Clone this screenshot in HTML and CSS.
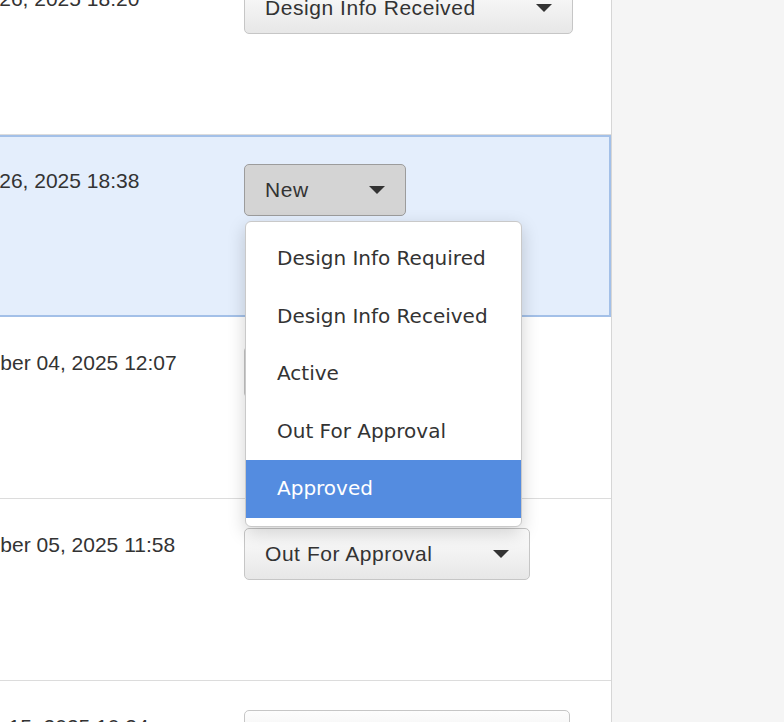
FILE: index.html
```html
<!DOCTYPE html>
<html lang="en">
<head>
    <meta charset="UTF-8">
    <meta name="viewport" content="width=device-width, initial-scale=1.0">
    <title>Orders</title>
    <link rel="stylesheet" href="styles.css">
</head>
<body>
    <div class="panel">
        <div class="orders">

            <!-- Pedido 1 -->
            <div class="order-row">
                <div class="order-date">August 26, 2025 18:20</div>
                <div class="order-status">
                    <button type="button" class="status-select">Design Info Received<span class="caret"></span></button>
                </div>
            </div>

            <!-- Pedido 2 (selecionado, menu aberto) -->
            <div class="order-row is-selected">
                <div class="order-date">August 26, 2025 18:38</div>
                <div class="order-status">
                    <button type="button" class="status-select is-open">New<span class="caret"></span></button>
                    <ul class="status-menu">
                        <li>Design Info Required</li>
                        <li>Design Info Received</li>
                        <li>Active</li>
                        <li>Out For Approval</li>
                        <li class="is-active">Approved</li>
                    </ul>
                </div>
            </div>

            <!-- Pedido 3 -->
            <div class="order-row">
                <div class="order-date">September 04, 2025 12:07</div>
                <div class="order-status">
                    <button type="button" class="status-select">Active<span class="caret"></span></button>
                </div>
            </div>

            <!-- Pedido 4 -->
            <div class="order-row">
                <div class="order-date">September 05, 2025 11:58</div>
                <div class="order-status">
                    <button type="button" class="status-select">Out For Approval<span class="caret"></span></button>
                </div>
            </div>

            <!-- Pedido 5 -->
            <div class="order-row">
                <div class="order-date">October 15, 2025 10:34</div>
                <div class="order-status">
                    <button type="button" class="status-select">Design Info Required<span class="caret"></span></button>
                </div>
            </div>

        </div>
    </div>
</body>
</html>
```

FILE: styles.css
```css
html, body {
    margin: 0;
    height: 100%;
}
body {
    font-family: 'Liberation Sans', Arial, sans-serif;
    background-color: #f5f5f5;
    color: #333;
}
.panel {
    box-sizing: border-box;
    width: 612px;
    height: 100%;
    background-color: #fff;
    border-right: 1px solid #d6d6d6;
    overflow: hidden;
}
/* a lista está rolada: primeira linha e início das datas ficam fora da tela */
.orders {
    margin: -47px 0 0 -72px;
}
.order-row {
    box-sizing: border-box;
    display: flex;
    height: 182px;
    padding-top: 29px;
    border-bottom: 1px solid #dcdcdc;
}
.order-row.is-selected {
    margin-left: -2px;
    padding-top: 27px;
    background-color: #e4eefc;
    border: 2px solid #a3c0e8;
}
.order-date {
    width: 316px;
    flex-shrink: 0;
    margin-top: 5px;
    font-size: 21px;
    line-height: 24px;
    white-space: nowrap;
}
.order-status {
    position: relative;
}
.status-select {
    display: inline-flex;
    align-items: center;
    gap: 60px;
    height: 52px;
    padding: 0 20px;
    font-family: inherit;
    font-size: 21px;
    letter-spacing: 0.55px;
    color: #333;
    background: linear-gradient(#fdfdfd, #e7e7e7);
    border: 1px solid #c6c6c6;
    border-radius: 5px;
    white-space: nowrap;
}
.status-select.is-open {
    background: #d4d4d4;
    border-color: #9c9c9c;
}
.caret {
    width: 0;
    height: 0;
    border-left: 8px solid transparent;
    border-right: 8px solid transparent;
    border-top: 8px solid #333;
}
.status-menu {
    position: absolute;
    top: 57px;
    left: 1px;
    box-sizing: border-box;
    width: 277px;
    margin: 0;
    padding: 8px 0;
    list-style: none;
    background-color: #fff;
    border: 1px solid #c9c9c9;
    border-radius: 6px;
    box-shadow: 0 6px 18px rgba(0,0,0,0.18);
    font-family: 'DejaVu Sans', sans-serif;
    font-size: 20px;
    z-index: 10;
}
.status-menu li {
    height: 57.5px;
    line-height: 57.5px;
    padding-left: 31px;
    white-space: nowrap;
}
.status-menu li.is-active {
    background-color: #548ce0;
    color: #fff;
}
```
